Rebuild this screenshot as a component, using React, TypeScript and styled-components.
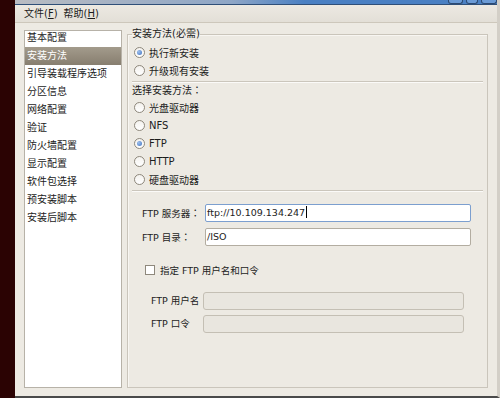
import styled, { createGlobalStyle } from "styled-components"

const GlobalStyle = createGlobalStyle`
  html, body {
    margin: 0;
    padding: 0;
    width: 500px;
    height: 398px;
    overflow: hidden;
    background: #2b0303;
  }
  body {
    font-family: "DejaVu Sans", "Noto Sans CJK SC", sans-serif;
    font-size: 10px;
    color: #1c1c1c;
  }
`

// Styles
const Desktop = styled.div`
  display: flex;
  width: 500px;
  height: 398px;
`
const DarkStrip = styled.div`
  width: 15px;
  background: #2b0303;
`
const Window = styled.div`
  flex: 1;
  display: flex;
  flex-direction: column;
  background: #edeae3;
  border-right: 3px solid #d3cfc7;
  border-bottom: 2px solid #4a4a4a;
`
const TitleStrip = styled.div`
  height: 4px;
  display: flex;
  justify-content: flex-end;
  gap: 3px;
  background: linear-gradient(90deg, #b9bcc2 0%, #8ea6c6 45%, #4a80c3 60%, #4a80c3 100%);
  border-bottom: 1px solid #2f4f78;
  overflow: hidden;
`
const WinButton = styled.div<{ $w: number }>`
  width: ${p => p.$w}px;
  height: 3px;
  border: 1px solid #2c4a72;
  border-top: none;
  border-radius: 0 0 3px 3px;
  background: #6b9bd6;
`
const MenuBar = styled.div`
  box-sizing: border-box;
  height: 18px;
  display: flex;
  align-items: center;
  gap: 6px;
  padding-left: 9px;
  background: linear-gradient(#ece9e2, #e3dfd7);
  border-bottom: 1px solid #cdc7bb;
`
const MenuItem = styled.span`
  line-height: 16px;
  u { text-decoration: underline; }
`
const Body = styled.div`
  flex: 1;
  min-height: 0;
  display: flex;
  gap: 5px;
  padding: 7px 9px 8px 9px;
`
const Sidebar = styled.div`
  box-sizing: border-box;
  width: 98px;
  background: #fff;
  border: 1px solid #b7b2a8;
  overflow: hidden;
`
const SideList = styled.div`
  margin-top: -2px;
`
const SideItem = styled.div<{ $active?: boolean }>`
  height: 18px;
  line-height: 18px;
  padding-left: 2px;
  white-space: nowrap;
  color: ${p => p.$active ? '#fff' : '#1c1c1c'};
  background: ${p => p.$active ? 'linear-gradient(#a39b8c, #877e6f)' : 'transparent'};
`
const Frame = styled.fieldset`
  flex: 1;
  min-width: 0;
  margin: -2px 0 0 0;
  padding: 0 4px;
  border: 1px solid #cac5bb;
  box-shadow: inset 1px 1px 0 #f8f6f2;
  font-size: 9.5px;
`
const FrameLegend = styled.legend`
  padding: 0;
  line-height: 12px;
  font-size: 10px;
`
const Content = styled.div`
  padding-top: 3px;
`
const RadioRow = styled.div`
  height: 18px;
  display: flex;
  align-items: center;
  gap: 4px;
  padding-left: 2px;
  font-size: 10px;
`
const Radio = styled.span<{ $checked?: boolean }>`
  box-sizing: border-box;
  width: 11px;
  height: 11px;
  border-radius: 50%;
  border: 1px solid #8e887c;
  background: linear-gradient(#f4f2ee, #ffffff);
  display: flex;
  align-items: center;
  justify-content: center;
  &::after {
    content: "";
    display: ${p => p.$checked ? 'block' : 'none'};
    width: 5px;
    height: 5px;
    border-radius: 50%;
    background: radial-gradient(circle at 35% 35%, #9ec0ee, #3f72c0);
  }
`
const Separator = styled.div`
  margin-top: 2px;
  height: 0;
  border-top: 1px solid #cbc6bc;
  border-bottom: 1px solid #fbfaf8;
`
const SectionLabel = styled.div`
  height: 14px;
  line-height: 14px;
  margin-bottom: 1px;
  font-size: 10px;
`
const Colon = styled.span`
  font-family: "Noto Sans CJK TC", sans-serif;
  font-size: 10px;
`
const Form = styled.div<{ $label: number; $left: number; $right: number; $top: number }>`
  display: grid;
  grid-template-columns: ${p => p.$label}px 1fr;
  row-gap: 5px;
  margin-top: ${p => p.$top}px;
  padding-left: ${p => p.$left}px;
  padding-right: ${p => p.$right}px;
`
const FieldLabel = styled.div`
  line-height: 18px;
  white-space: nowrap;
`
const Entry = styled.div<{ $focused?: boolean; $disabled?: boolean }>`
  box-sizing: border-box;
  height: 18px;
  line-height: 16px;
  padding: 0 1px;
  border: 1px solid ${p => p.$focused ? '#7c9fcf' : p.$disabled ? '#c4bfb4' : '#b3ada1'};
  border-radius: ${p => p.$disabled ? '3px' : '2px'};
  background: ${p => p.$disabled ? '#e9e6df' : '#fff'};
  white-space: nowrap;
  overflow: hidden;
`
const Caret = styled.span`
  display: inline-block;
  width: 1px;
  height: 12px;
  margin-left: 1px;
  vertical-align: -2px;
  background: #000;
`
const CheckRow = styled.div`
  height: 18px;
  margin-top: 14px;
  display: flex;
  align-items: center;
  gap: 5px;
  padding-left: 13px;
`
const Checkbox = styled.span`
  box-sizing: border-box;
  width: 10px;
  height: 10px;
  border: 1px solid #8e887c;
  background: #fff;
`

const sections = [
  '基本配置', '安装方法', '引导装载程序选项', '分区信息', '网络配置', '验证',
  '防火墙配置', '显示配置', '软件包选择', '预安装脚本', '安装后脚本',
]
const methods = [
  { label: '光盘驱动器' },
  { label: 'NFS' },
  { label: 'FTP', checked: true },
  { label: 'HTTP' },
  { label: '硬盘驱动器' },
]

const App: React.FC = () => {
  return (
    <>
      <GlobalStyle />
      <Desktop>
        <DarkStrip />
        <Window>
          <TitleStrip>
            <WinButton $w={13} />
            <WinButton $w={10} />
            <WinButton $w={14} />
          </TitleStrip>
          <MenuBar>
            <MenuItem>文件(<u>F</u>)</MenuItem>
            <MenuItem>帮助(<u>H</u>)</MenuItem>
          </MenuBar>
          <Body>
            <Sidebar>
              <SideList>
                {sections.map(s => <SideItem key={s} $active={s === '安装方法'}>{s}</SideItem>)}
              </SideList>
            </Sidebar>
            <Frame>
              <FrameLegend>安装方法(必需)</FrameLegend>
              <Content>
                <RadioRow><Radio $checked />执行新安装</RadioRow>
                <RadioRow><Radio />升级现有安装</RadioRow>
                <Separator />
                <SectionLabel>选择安装方法<Colon>：</Colon></SectionLabel>
                {methods.map(m => (
                  <RadioRow key={m.label}><Radio $checked={m.checked} />{m.label}</RadioRow>
                ))}
                <Separator />
                <Form $label={63} $left={10} $right={12} $top={12}>
                  <FieldLabel>FTP 服务器<Colon>：</Colon></FieldLabel>
                  <Entry $focused>ftp://10.109.134.247<Caret /></Entry>
                  <FieldLabel>FTP 目录<Colon>：</Colon></FieldLabel>
                  <Entry>/ISO</Entry>
                </Form>
                <CheckRow><Checkbox />指定 FTP 用户名和口令</CheckRow>
                <Form $label={52} $left={19} $right={19} $top={13}>
                  <FieldLabel>FTP 用户名</FieldLabel>
                  <Entry $disabled />
                  <FieldLabel>FTP 口令</FieldLabel>
                  <Entry $disabled />
                </Form>
              </Content>
            </Frame>
          </Body>
        </Window>
      </Desktop>
    </>
  )
}

export default App
